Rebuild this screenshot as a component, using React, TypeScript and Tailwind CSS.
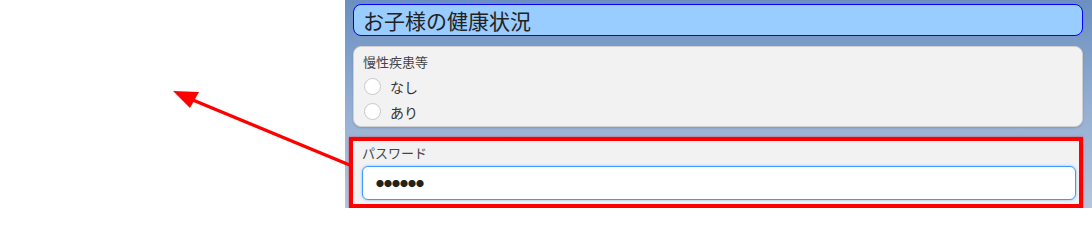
import React from 'react';

const jp = "font-['Noto_Sans_CJK_JP','Noto_Sans',sans-serif]";

const Radio: React.FC<{ label: string }> = ({ label }) => (
  <label className="flex items-center h-[25px] gap-[9px]">
    <span className="ml-[1px] w-[17px] h-[17px] rounded-full bg-white border border-[#c8c8c8]" />
    <span className="text-[14px] text-[#333] leading-none">{label}</span>
  </label>
);

const Arrow: React.FC = () => (
  <svg className="absolute inset-0 pointer-events-none" width="1092" height="208" viewBox="0 0 1092 208">
    <line x1="352" y1="166" x2="188" y2="98" stroke="#ff0000" strokeWidth="3.5" />
    <polygon points="173,91 199,92 190,108" fill="#ff0000" />
  </svg>
);

export default function App() {
  return (
    <div className={`relative w-[1092px] h-[208px] flex bg-white overflow-hidden ${jp}`}>
      <div className="w-[345px] shrink-0" />
      <div className="flex-1 flex flex-col pl-2 pr-[9px] pt-1 bg-gradient-to-b from-[#6a8fc0] via-[#93aed2] to-[#b5c5dd]">
        <div className="h-[32px] rounded-[8px] border border-[#0000ff] bg-[#99ccff] flex items-center pl-[9px]">
          <h2 className="text-[21px] text-[#222] leading-none">お子様の健康状況</h2>
        </div>

        <div className="mt-[10px] h-[81px] rounded-[8px] border border-[#d0d0d0] bg-[#f2f2f2] shadow-[0_1px_2px_rgba(0,0,0,0.15)] px-[9px] pt-[6px]">
          <div className="text-[13px] text-[#444] leading-[18px] mb-[3px]">慢性疾患等</div>
          <Radio label="なし" />
          <Radio label="あり" />
        </div>

        <div className="mt-[10px] -ml-1 h-[71px] border-[4px] border-[#ff0000] bg-[#f2f2f2] pl-[9px] pr-[3px] pt-[3px] shadow-[0_0_2px_rgba(255,0,0,0.6)]">
          <div className="text-[13px] text-[#444] leading-[18px] mb-[4px]">パスワード</div>
          <input
            type="text"
            readOnly
            value="●●●●●●"
            className="w-full h-[34px] rounded-[6px] bg-white border border-[#3d9bff] shadow-[0_0_3px_rgba(61,155,255,0.6)] pl-[13px] text-[8px] text-[#222] outline-none"
          />
        </div>
      </div>
      <Arrow />
    </div>
  );
}
